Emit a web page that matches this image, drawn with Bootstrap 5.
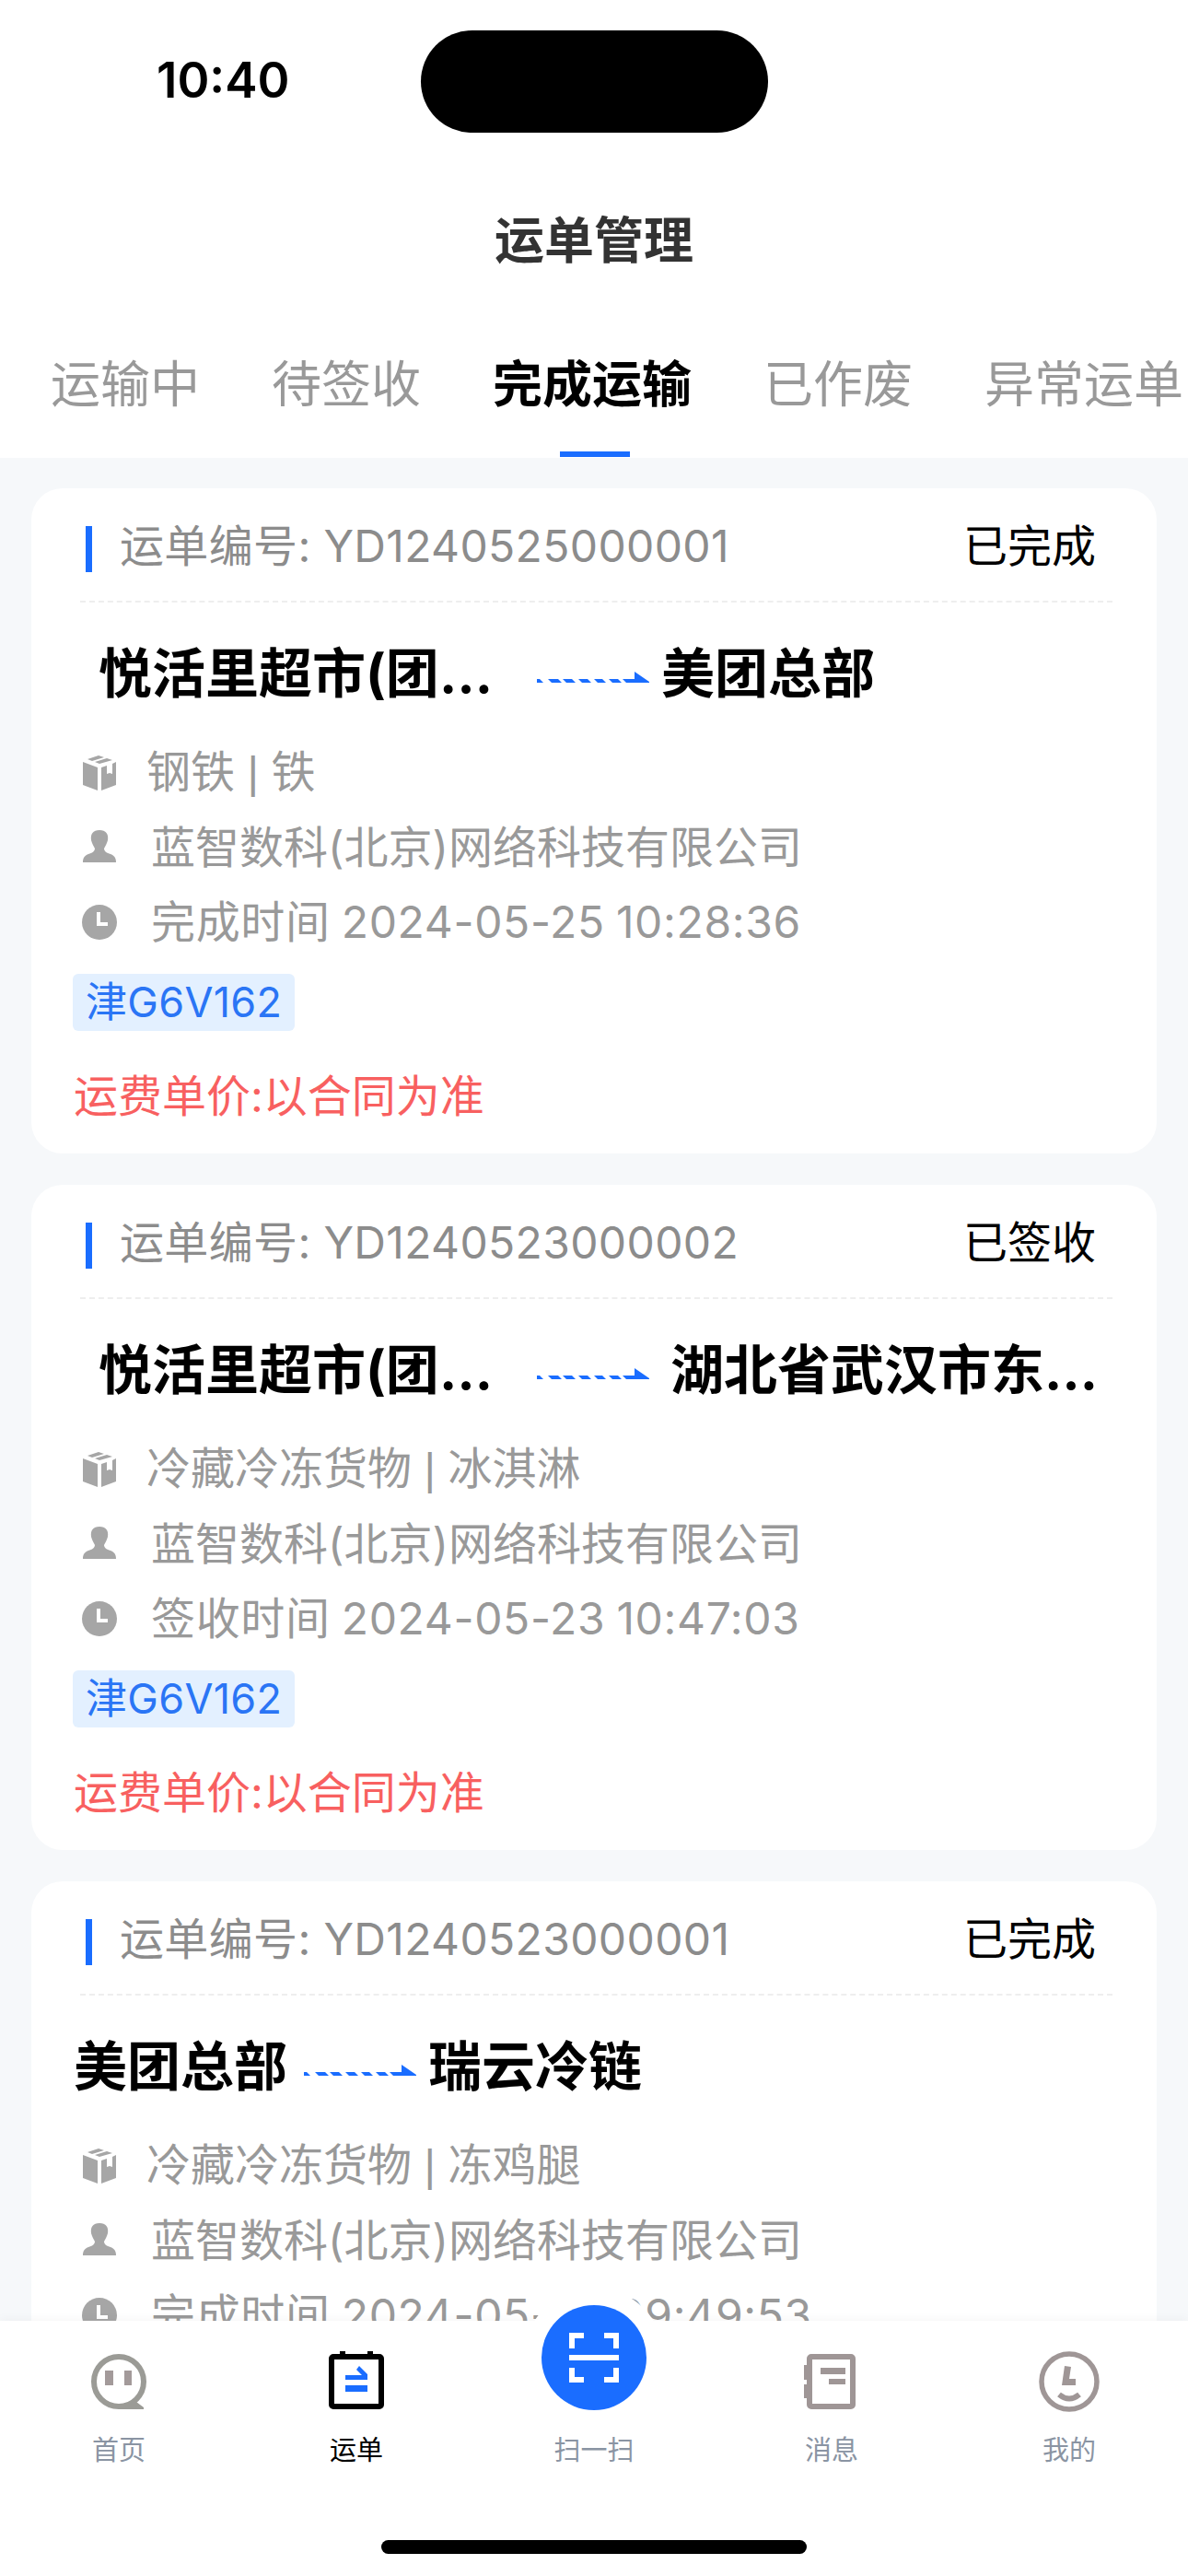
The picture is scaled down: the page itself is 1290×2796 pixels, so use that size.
<!DOCTYPE html>
<html lang="zh">
<head>
  <meta charset="UTF-8">
  <meta name="viewport" content="width=device-width, initial-scale=1.0">
  <title>运单管理</title>
  <link href="https://cdn.jsdelivr.net/npm/bootstrap@5.3.3/dist/css/bootstrap.min.css" rel="stylesheet">
  <style>
    html, body { height: 100%; }
    body { font-family: Inter, "Noto Sans CJK SC", sans-serif; background: #f6f8fa; overflow: hidden; }
    .app-shell { height: 2796px; }
    .top-head { background: #fff; height: 497px; flex: none; }
    .status-row { height: 219px; position: relative; }
    .status-time { position: absolute; left: 170px; top: 54px; font: 600 53px/66px Inter, sans-serif; color: #000; }
    .island { position: absolute; left: 457px; top: 33px; width: 377px; height: 111px; background: #000; border-radius: 56px; }
    .page-title { height: 86px; line-height: 86px; font-size: 54px; font-weight: 700; color: #333; text-align: center; }
    .tab-row { padding-top: 70px; padding-left: 55px; white-space: nowrap; }
    .tab-item { font-size: 54px; line-height: 86px; color: #999; position: relative; margin-right: 78px; height: 122px; display: block; flex: none; }
    .tab-item.now { color: #000; font-weight: 700; }
    .tab-item.now::after { content: ""; position: absolute; left: 73px; width: 76px; height: 6px; background: #1a6dff; top: 115px; }
    .sheet-list { padding: 33px 34px 0; overflow: hidden; min-height: 0; }
    .bill-card { background: #fff; border-radius: 34px; height: 722px; padding: 0 48px 0 46px; margin-bottom: 34px; flex: none; }
    .bill-head { height: 124px; padding-left: 6px; border-bottom: 2px dashed #eee; padding-right: 18px; margin-left: 7px; padding-top: 4px; }
    .bill-bar { width: 7px; height: 50px; background: #1a6dff; margin-right: 30px; margin-top: 5px; flex: none; }
    .bill-no { font-size: 48px; letter-spacing: .35px; color: #8c8c8c; }
    .bill-state { font-size: 48px; color: #000; }
    .route-row { height: 134px; margin-top: 10px; }
    .route-stop { font-size: 58px; font-weight: 700; color: #000; max-width: 485px; overflow: hidden; text-overflow: ellipsis; white-space: nowrap; line-height: 80px; }
    .route-stop.long-from { padding-left: 27px; }
    .route-stop.long-to { padding: 0 10px; }
    .route-arrow { margin: 8px 13px 0 18px; flex: none; width: 122px; height: 12px; }
    .info-line { height: 81px; font-size: 48px; color: #999; }
    .info-ico { width: 40px; height: 40px; flex: none; margin-left: 8px; margin-right: 31px; }
    .info-ico.wide-gap { margin-right: 36px; }
    .pipe-mark { font-family: "Liberation Sans", sans-serif; }
    .time-val { letter-spacing: .65px; word-spacing: -2px; }
    .plate-tag { display: inline-block; background: #e3f0ff; color: #2a75f5; font-size: 45px; letter-spacing: .3px; line-height: 62px; height: 62px; padding: 0 14px; border-radius: 6px; margin-top: 16px; margin-left: -1px; }
    .fee-line { color: #f86060; font-size: 48px; line-height: 70px; margin-top: 36px; }
    .tab-foot { background: #fff; height: 277px; flex: none; position: relative; box-shadow: 0 -2px 10px rgba(0,0,0,.04); }
    .foot-item { width: 258px; padding-top: 33px; color: #8a94a3; font-size: 29px; }
    .foot-item.now { color: #000; }
    .foot-ico { height: 66px; width: 70px; display: block; margin: 0 auto; }
    .foot-txt { text-align: center; line-height: 40px; margin-top: 22px; }
    .scan-wrap { position: absolute; left: 588px; top: -17px; width: 114px; height: 114px; background: #1a6dff; border-radius: 50%; box-shadow: 0 0 0 19px #fff; }
    .foot-row { position: relative; z-index: 1; }
    .scan-wrap svg { display: block; }
    .home-bar { position: absolute; left: 414px; top: 238px; width: 462px; height: 15px; border-radius: 8px; background: #000; }
  </style>
</head>
<body>
  <div class="app-shell d-flex flex-column">
    <div class="top-head">
      <div class="status-row">
        <span class="status-time">10:40</span>
        <span class="island"></span>
      </div>
      <div class="page-title">运单管理</div>
      <div class="tab-row d-flex" id="tabs"></div>
    </div>
    <div class="sheet-list flex-grow-1" id="list"></div>
    <div class="tab-foot">
      <div class="scan-wrap">
        <svg viewBox="0 0 114 114" width="114" height="114" fill="#fff">
          <path d="M30 47V30h16v6H36v11zM84 47V30H68v6h10v11zM30 68v16h16v-6H36V68zM84 68v16H68v-6h10V68z"/>
          <rect x="30" y="54" width="54" height="6"/>
        </svg>
      </div>
      <div class="d-flex foot-row" id="foot"></div>
      <div class="home-bar"></div>
    </div>
  </div>
  <script>
    const ICONS = {
      box: '<svg class="info-ico" viewBox="0 0 40 40" fill="#a6a6a6"><path d="M19 1 7 5l5 2 13-4zM28 4 15 8l5 2 14-4zM2 8l16 6v25L2 33zM38 8v25L22 39V14l6-2v9l3-1 3 1V10z"/></svg>',
      user: '<svg class="info-ico wide-gap" viewBox="0 0 40 40" fill="#a6a6a6"><path d="M20 1c7 0 10 4 9 11-1 4-3 7-4 9 0 3 3 5 7 6 5 2 6 5 6 9H2c0-4 1-7 6-9 4-1 7-3 7-6-1-2-3-5-4-9-1-7 2-11 9-11z"/></svg>',
      clock: '<svg class="info-ico wide-gap" viewBox="0 0 40 40"><circle cx="20" cy="20" r="19" fill="#a6a6a6"/><path d="M17 9h4v11h8v4H17z" fill="#fff"/></svg>'
    };
    const ARROW = '<svg class="route-arrow" viewBox="0 0 122 12" fill="#1a6dff"><path d="M0 8h3l4 4H0zM12 8h11l4 4H16zM28 8h10l4 4H32zM45 8h10l4 4H49zM62 8h9l4 4H66zM78 8h10l4 4H82zM106 0l16 11v1H97l-4-4h13z"/></svg>';
    const BILLS = [
      { no: "YD1240525000001", state: "已完成", from: "悦活里超市(团结湖店)", fromCls: "long-from", to: "美团总部", toCls: "", goods: "钢铁", item: "铁", timeLabel: "完成时间", time: "2024-05-25 10:28:36" },
      { no: "YD1240523000002", state: "已签收", from: "悦活里超市(团结湖店)", fromCls: "long-from", to: "湖北省武汉市东西湖区", toCls: "long-to", goods: "冷藏冷冻货物", item: "冰淇淋", timeLabel: "签收时间", time: "2024-05-23 10:47:03" },
      { no: "YD1240523000001", state: "已完成", from: "美团总部", fromCls: "", to: "瑞云冷链", toCls: "", goods: "冷藏冷冻货物", item: "冻鸡腿", timeLabel: "完成时间", time: "2024-05-23 09:49:53" }
    ];
    const list = document.getElementById("list");
    BILLS.forEach((b) => {
      list.insertAdjacentHTML("beforeend", `
        <div class="bill-card">
          <div class="bill-head d-flex align-items-center">
            <span class="bill-bar"></span>
            <span class="bill-no flex-grow-1">运单编号: ${b.no}</span>
            <span class="bill-state">${b.state}</span>
          </div>
          <div class="route-row d-flex align-items-center">
            <span class="route-stop ${b.fromCls}">${b.from}</span>${ARROW}<span class="route-stop ${b.toCls}">${b.to}</span>
          </div>
          <div class="info-line d-flex align-items-center">${ICONS.box}<span>${b.goods} <span class="pipe-mark">|</span> ${b.item}</span></div>
          <div class="info-line d-flex align-items-center">${ICONS.user}<span>蓝智数科(北京)网络科技有限公司</span></div>
          <div class="info-line d-flex align-items-center">${ICONS.clock}<span class="time-val">${b.timeLabel} ${b.time}</span></div>
          <span class="plate-tag">津G6V162</span>
          <div class="fee-line">运费单价:以合同为准</div>
        </div>`);
    });
    const tabs = document.getElementById("tabs");
    ["运输中", "待签收", "完成运输", "已作废", "异常运单"].forEach((t, i) => {
      tabs.insertAdjacentHTML("beforeend", `<span class="tab-item${i === 2 ? " now" : ""}">${t}</span>`);
    });
    const foot = document.getElementById("foot");
    const FOOT_ICONS = [
      '<svg class="foot-ico" viewBox="0 0 70 66"><circle cx="35" cy="33" r="27" fill="none" stroke="#9b9b96" stroke-width="6"/><path d="M35 57H52l2-2 8 6v2H35z" fill="#9b9b96"/><path d="M20 21h9v16h-9zM41 21h8v16h-8z" fill="#a39a9a"/></svg>',
      '<svg class="foot-ico" viewBox="0 0 70 66"><rect x="8" y="6" width="54" height="54" rx="2" fill="none" stroke="#000" stroke-width="6"/><path d="M17 0h6v4h-6zM47 0h6v4h-6z" fill="#000"/><path d="M23 26H41l-6-6 3-4 9 9v6H23zM23 37h24v7H23z" fill="#1a6dff"/></svg>',
      "",
      '<svg class="foot-ico" viewBox="0 0 70 66"><rect x="11" y="6" width="47" height="54" rx="2" fill="none" stroke="#9f9696" stroke-width="6"/><path d="M5 15h3v16H5zM5 36h3v15H5zM23 18h27v7H23zM32 30h18v6H32z" fill="#9f9696"/></svg>',
      '<svg class="foot-ico" viewBox="0 0 70 66"><circle cx="35" cy="33" r="30" fill="none" stroke="#9f9696" stroke-width="5.5"/><path d="M30 16l7 1-2 13h7v7H27z" fill="#9f9696"/><path d="M24 47q11 9 22 0" fill="none" stroke="#9f9696" stroke-width="6"/></svg>'
    ];
    ["首页", "运单", "扫一扫", "消息", "我的"].forEach((t, i) => {
      const ico = FOOT_ICONS[i] || '<span class="foot-ico"></span>';
      foot.insertAdjacentHTML("beforeend", `<div class="foot-item${i === 1 ? " now" : ""}">${ico}<div class="foot-txt">${t}</div></div>`);
    });
  </script>
  <script src="https://cdn.jsdelivr.net/npm/bootstrap@5.3.3/dist/js/bootstrap.bundle.min.js"></script>
</body>
</html>
